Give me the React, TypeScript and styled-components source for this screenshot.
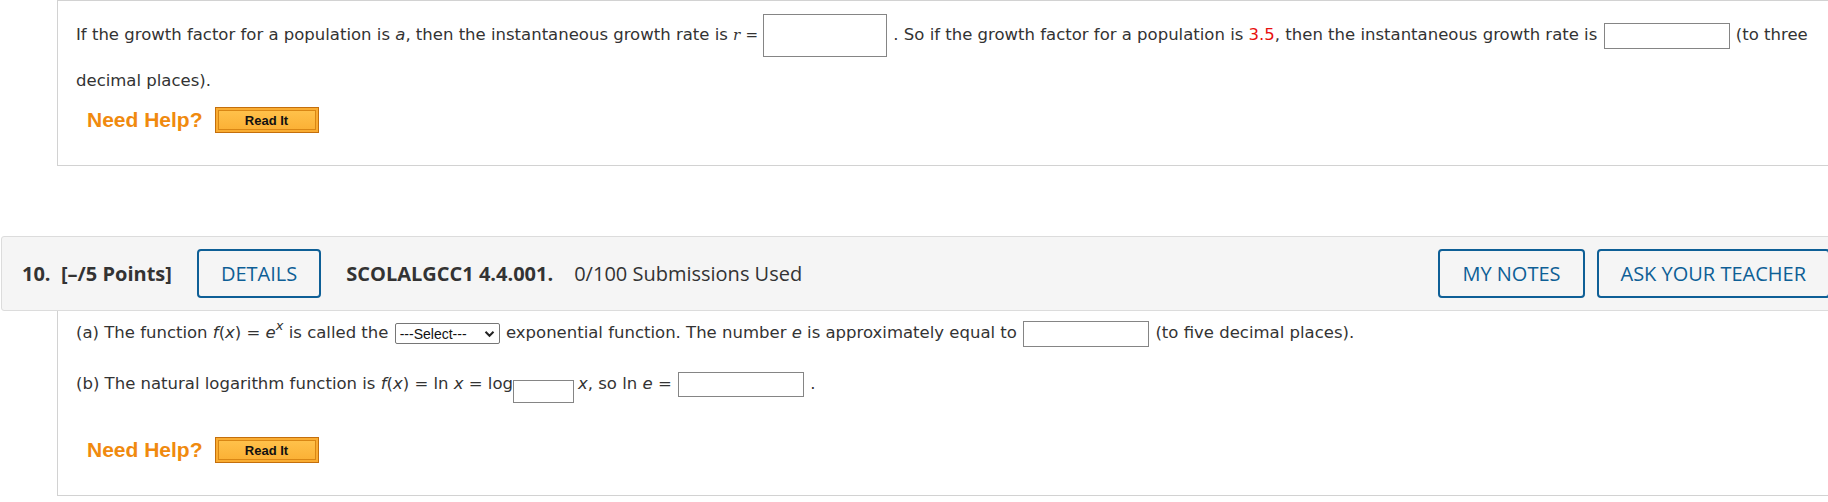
import React from "react";
import styled, { createGlobalStyle } from "styled-components";

const GlobalStyle = createGlobalStyle`
  html, body {
    margin: 0;
    padding: 0;
    background: #ffffff;
    overflow: hidden;
  }
  body {
    font-family: "DejaVu Sans", Verdana, sans-serif;
    color: #333333;
  }
`;

const BLUE = "#0e5f96";

export default function App() {
  return (
    <>
      <GlobalStyle />
      <Page>
        <QuestionPanel $top>
          <Paragraph>
            If the growth factor for a population is <Var>a</Var>, then the
            instantaneous growth rate is <MathR>r</MathR> <Equals>=</Equals>
            <AnswerBox $w={124} $h={43} /> . So if the growth factor for a
            population is <Given>3.5</Given>, then the instantaneous growth rate
            is <AnswerBox $w={126} $h={26} /> (to three decimal places).
          </Paragraph>
          <HelpRow>
            <NeedHelp>Need Help?</NeedHelp>
            <ReadItButton>
              <ReadItInner>Read It</ReadItInner>
            </ReadItButton>
          </HelpRow>
        </QuestionPanel>

        <HeaderBar>
          <QuestionNumber>10.&nbsp; [–/5 Points]</QuestionNumber>
          <OutlineButton>DETAILS</OutlineButton>
          <QuestionCode>SCOLALGCC1 4.4.001.</QuestionCode>
          <Submissions>0/100 Submissions Used</Submissions>
          <HeaderActions>
            <OutlineButton>MY NOTES</OutlineButton>
            <OutlineButton>ASK YOUR TEACHER</OutlineButton>
          </HeaderActions>
        </HeaderBar>

        <QuestionPanel>
          <PartLine>
            (a) The function <Var>f</Var>(<Var>x</Var>) = <Var>e</Var>
            <Sup>
              <Var>x</Var>
            </Sup>{" "}
            is called the{" "}
            <FakeSelect>
              ---Select---
              <svg width="11" height="8" viewBox="0 0 11 8">
                <path
                  d="M1.5 1.8 L5.5 5.8 L9.5 1.8"
                  fill="none"
                  stroke="#222"
                  strokeWidth="2"
                />
              </svg>
            </FakeSelect>{" "}
            exponential function. The number <Var>e</Var> is approximately
            equal to <AnswerBox $w={126} $h={26} /> (to five decimal places).
          </PartLine>
          <PartLine $gap={23}>
            (b) The natural logarithm function is <Var>f</Var>(<Var>x</Var>) =
            ln <Var>x</Var> = log
            <SubBox />
            <Var>x</Var>, so ln <Var>e</Var> = <AnswerBox $w={126} $h={25} /> .
          </PartLine>
          <HelpRow $gap={34}>
            <NeedHelp>Need Help?</NeedHelp>
            <ReadItButton>
              <ReadItInner>Read It</ReadItInner>
            </ReadItButton>
          </HelpRow>
        </QuestionPanel>
      </Page>
    </>
  );
}

const Page = styled.div`
  width: 1842px;
`;

const QuestionPanel = styled.div<{ $top?: boolean }>`
  margin-left: 57px;
  border: 1px solid #d2d2d2;
  border-top: ${p => (p.$top ? "1px solid #d2d2d2" : "none")};
  padding: ${p => (p.$top ? "11px" : "8px")} 18px 32px 18px;
`;

const Paragraph = styled.div`
  font-size: 16.5px;
  line-height: 45px;
`;

const Var = styled.i`
  font-style: italic;
`;

const MathR = styled.i`
  font-family: "DejaVu Serif", serif;
  font-style: italic;
  font-size: 15px;
`;

const Equals = styled.span`
  font-size: 15px;
  margin-right: 4px;
`;

const Given = styled.span`
  color: #e8100f;
`;

const Sup = styled.sup`
  font-size: 13px;
  vertical-align: 8px;
  line-height: 0;
`;

const AnswerBox = styled.span<{ $w: number; $h: number }>`
  display: inline-block;
  box-sizing: border-box;
  width: ${p => p.$w}px;
  height: ${p => p.$h}px;
  border: 1px solid #858585;
  background: #ffffff;
  vertical-align: middle;
  margin: 0 1px;
`;

const SubBox = styled.span`
  display: inline-block;
  box-sizing: border-box;
  width: 61px;
  height: 23px;
  border: 1px solid #858585;
  background: #ffffff;
  vertical-align: -14px;
  margin-right: 4px;
`;

const FakeSelect = styled.span`
  display: inline-flex;
  align-items: center;
  justify-content: space-between;
  box-sizing: border-box;
  width: 105px;
  height: 21px;
  padding: 0 4px 0 4px;
  border: 1px solid #767676;
  border-radius: 2px;
  background: #ffffff;
  font-family: "Liberation Sans", Arial, sans-serif;
  font-size: 14px;
  color: #111111;
  vertical-align: middle;
  margin: 0 1px;
`;

const HelpRow = styled.div<{ $gap?: number }>`
  display: flex;
  align-items: center;
  gap: 12px;
  height: 26px;
  margin-top: ${p => p.$gap ?? 4}px;
  padding-left: 11px;
`;

const NeedHelp = styled.span`
  font-family: "Liberation Sans", Arial, sans-serif;
  font-weight: bold;
  font-size: 21px;
  color: #f08a0e;
`;

const ReadItButton = styled.span`
  box-sizing: border-box;
  display: flex;
  width: 104px;
  height: 26px;
  padding: 2px;
  border: 1px solid #c46f0c;
  background: #f9ac32;
`;

const ReadItInner = styled.span`
  flex: 1;
  display: flex;
  align-items: center;
  justify-content: center;
  border: 1px solid #d98614;
  background: linear-gradient(#ffc14a, #fbb136);
  font-family: "Liberation Sans", Arial, sans-serif;
  font-weight: bold;
  font-size: 13px;
  color: #111111;
`;

const HeaderBar = styled.div`
  display: flex;
  align-items: center;
  gap: 25px;
  box-sizing: border-box;
  height: 75px;
  margin: 70px 0 0 1px;
  padding: 0 11px 0 20px;
  border: 1px solid #dcdcdc;
  border-radius: 3px;
  background: #f5f5f5;
  font-family: "Open Sans", sans-serif;
  font-size: 20px;
  color: #333333;
`;

const QuestionNumber = styled.span`
  font-weight: bold;
`;

const QuestionCode = styled.span`
  font-weight: bold;
  margin-right: -4px;
`;

const Submissions = styled.span`
  font-weight: normal;
`;

const HeaderActions = styled.div`
  display: flex;
  gap: 12px;
  margin-left: auto;
`;

const OutlineButton = styled.span`
  display: flex;
  align-items: center;
  box-sizing: border-box;
  height: 49px;
  padding: 0 22px;
  border: 2px solid ${BLUE};
  border-radius: 4px;
  color: ${BLUE};
  font-size: 20px;
  background: transparent;
`;

const PartLine = styled.div<{ $gap?: number }>`
  font-size: 16.5px;
  line-height: 28px;
  margin-top: ${p => p.$gap ?? 0}px;
`;
